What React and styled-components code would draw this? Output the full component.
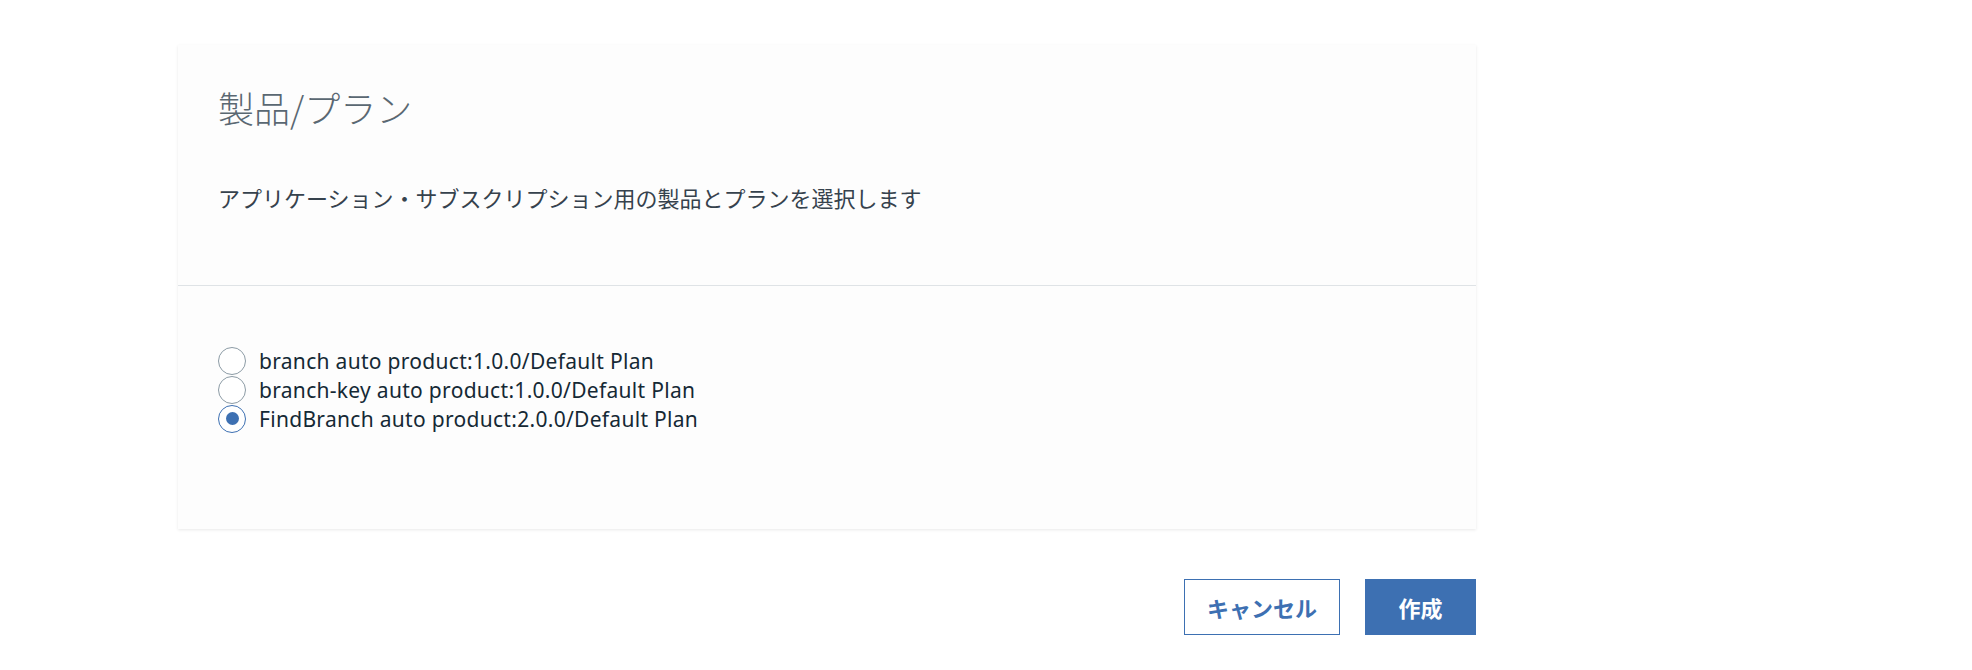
import React, { useState } from "react";
import styled, { createGlobalStyle } from "styled-components";

const GlobalStyle = createGlobalStyle`
  html, body { margin: 0; padding: 0; background: #ffffff; }
  body { font-family: "Noto Sans", "Noto Sans CJK JP", sans-serif; }
  * { box-sizing: border-box; }
`;

const Page = styled.div`
  width: 1972px;
  padding: 45px 0 0 178px;
`;

const Column = styled.div`
  width: 1298px;
  display: flex;
  flex-direction: column;
`;

const Card = styled.section`
  background: #fdfdfd;
  box-shadow: 0 1px 3px rgba(0, 0, 0, 0.09);
  display: flex;
  flex-direction: column;
`;

const Header = styled.div`
  height: 241px;
  padding: 38px 40px 0 40px;
  border-bottom: 1px solid #dfe3e6;
`;

const Title = styled.h2`
  margin: 0;
  font-family: "Noto Sans CJK JP", sans-serif;
  font-weight: 300;
  font-size: 36px;
  line-height: 48px;
  color: #5a6872;
`;

const Description = styled.p`
  margin: 51px 0 0 0;
  font-family: "Noto Sans CJK JP", sans-serif;
  font-weight: 400;
  font-size: 22px;
  line-height: 30px;
  color: #36424d;
`;

const Body = styled.div`
  height: 243px;
  padding: 60px 40px 0 40px;
`;

const RadioList = styled.div`
  display: flex;
  flex-direction: column;
`;

const RadioRow = styled.label`
  display: flex;
  align-items: center;
  gap: 13px;
  height: 29px;
  cursor: pointer;
`;

const Circle = styled.span`
  flex: none;
  width: 28px;
  height: 28px;
  border-radius: 50%;
  border: 1px solid ${(p) => (p.$checked ? "#3d70b2" : "#8c9ba5")};
  background: #ffffff;
  display: flex;
  align-items: center;
  justify-content: center;
  &::after {
    content: "";
    width: 13px;
    height: 13px;
    border-radius: 50%;
    background: #3d70b2;
    display: ${(p) => (p.$checked ? "block" : "none")};
  }
`;

const Label = styled.span`
  font-family: "Noto Sans", sans-serif;
  font-size: 21px;
  letter-spacing: 0.3px;
  color: #152935;
  white-space: nowrap;
`;

const Actions = styled.div`
  display: flex;
  justify-content: flex-end;
  gap: 25px;
  margin-top: 50px;
`;

const Button = styled.button`
  height: 56px;
  width: ${(p) => p.$w}px;
  font-family: "Noto Sans CJK JP", sans-serif;
  font-weight: 700;
  font-size: 22px;
  border: 1.5px solid #3d70b2;
  background: ${(p) => (p.$primary ? "#3d70b2" : "#ffffff")};
  color: ${(p) => (p.$primary ? "#ffffff" : "#3d70b2")};
  cursor: pointer;
  padding: 0;
`;

const options = [
  "branch auto product:1.0.0/Default Plan",
  "branch-key auto product:1.0.0/Default Plan",
  "FindBranch auto product:2.0.0/Default Plan",
];

export default function App() {
  const [sel, setSel] = useState(2);
  return (
    <Page>
      <GlobalStyle />
      <Column>
        <Card>
          <Header>
            <Title>製品/プラン</Title>
            <Description>
              アプリケーション・サブスクリプション用の製品とプランを選択します
            </Description>
          </Header>
          <Body>
            <RadioList>
              {options.map((o, i) => (
                <RadioRow key={o} onClick={() => setSel(i)}>
                  <Circle $checked={sel === i} />
                  <Label>{o}</Label>
                </RadioRow>
              ))}
            </RadioList>
          </Body>
        </Card>
        <Actions>
          <Button $w={156}>キャンセル</Button>
          <Button $w={111} $primary>
            作成
          </Button>
        </Actions>
      </Column>
    </Page>
  );
}
